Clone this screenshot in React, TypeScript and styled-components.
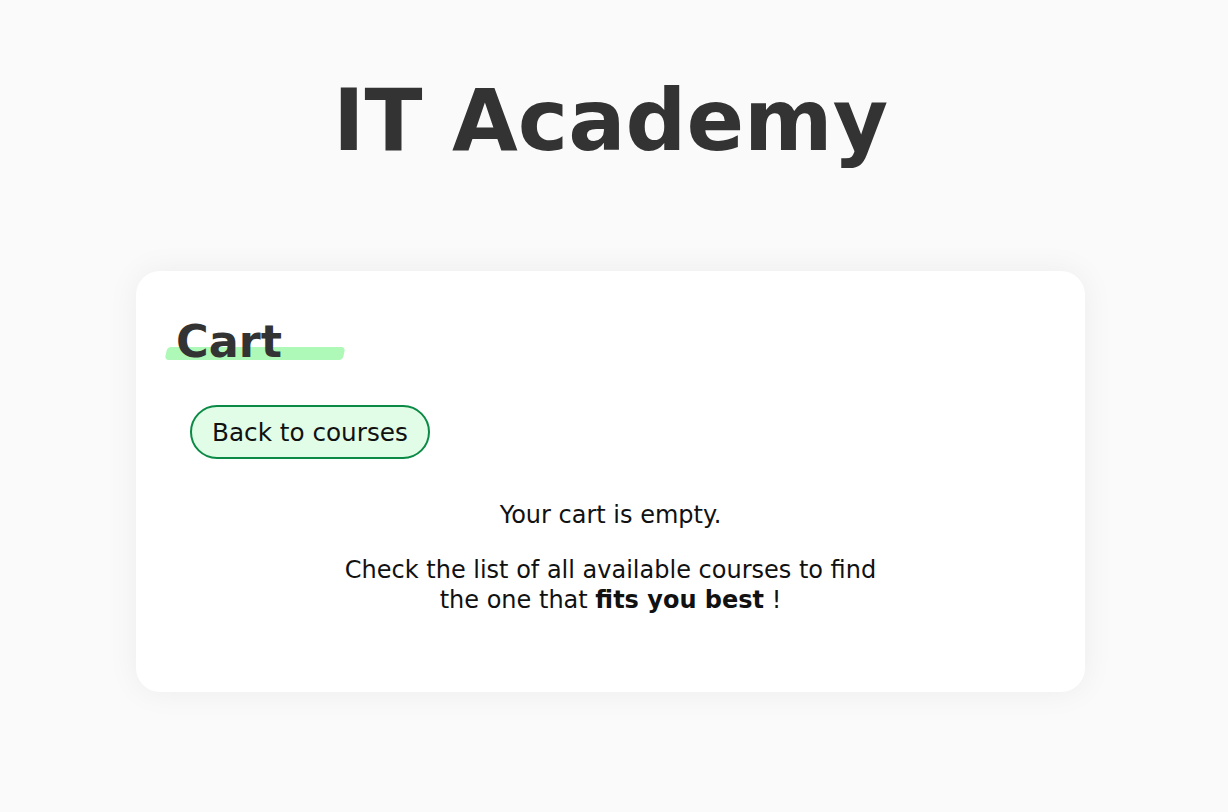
import React from "react";
import styled, { createGlobalStyle } from "styled-components";

const GlobalStyle = createGlobalStyle`
  html, body {
    margin: 0;
    padding: 0;
    background: #fafafa;
  }
  body {
    font-family: "DejaVu Sans", "Liberation Sans", sans-serif;
    color: #111;
  }
`;

const Page = styled.div`
  display: flex;
  flex-direction: column;
  align-items: center;
  padding: 0 7px 120px 0;
`;

const Title = styled.h1`
  margin: 70px 0 0;
  font-size: 85px;
  line-height: 1.2;
  font-weight: 800;
  color: #333333;
  text-align: center;
  letter-spacing: 0;
`;

const Card = styled.section`
  box-sizing: border-box;
  width: 949px;
  margin-top: 99px;
  background: #ffffff;
  border-radius: 24px;
  box-shadow: 0 0 32px rgba(0, 0, 0, 0.06);
  padding: 44px 39px 77px;
  display: flex;
  flex-direction: column;
`;

const Heading = styled.h2`
  position: relative;
  z-index: 0;
  align-self: flex-start;
  margin: 0 0 0 1px;
  font-size: 44.5px;
  line-height: 1.2;
  font-weight: 700;
  color: #333333;

  &::before {
    content: "";
    position: absolute;
    z-index: -1;
    left: -10px;
    top: 32px;
    width: 178px;
    height: 13px;
    background: #aef8b8;
    border-radius: 4px;
    transform: skewX(-12deg);
  }
`;

const BackButton = styled.button`
  align-self: flex-start;
  margin: 37px 0 0 15px;
  box-sizing: border-box;
  height: 54px;
  padding: 0 20px;
  border: 2px solid #0a8a44;
  border-radius: 27px;
  background: #e1fde7;
  font-family: inherit;
  font-size: 24.7px;
  color: #111;
  display: flex;
  align-items: center;
  cursor: pointer;
`;

const Message = styled.p<{ $top: number }>`
  margin: ${(p) => p.$top}px auto 0;
  max-width: 545px;
  font-size: 24px;
  line-height: 30px;
  text-align: center;
  color: #111;
`;

export default function App() {
  return (
    <>
      <GlobalStyle />
      <Page>
        <Title>IT Academy</Title>
        <Card>
          <Heading>Cart</Heading>
          <BackButton type="button">Back to courses</BackButton>
          <Message $top={41}>Your cart is empty.</Message>
          <Message $top={25}>
            Check the list of all available courses to find the one that{" "}
            <strong>fits you best</strong> !
          </Message>
        </Card>
      </Page>
    </>
  );
}
